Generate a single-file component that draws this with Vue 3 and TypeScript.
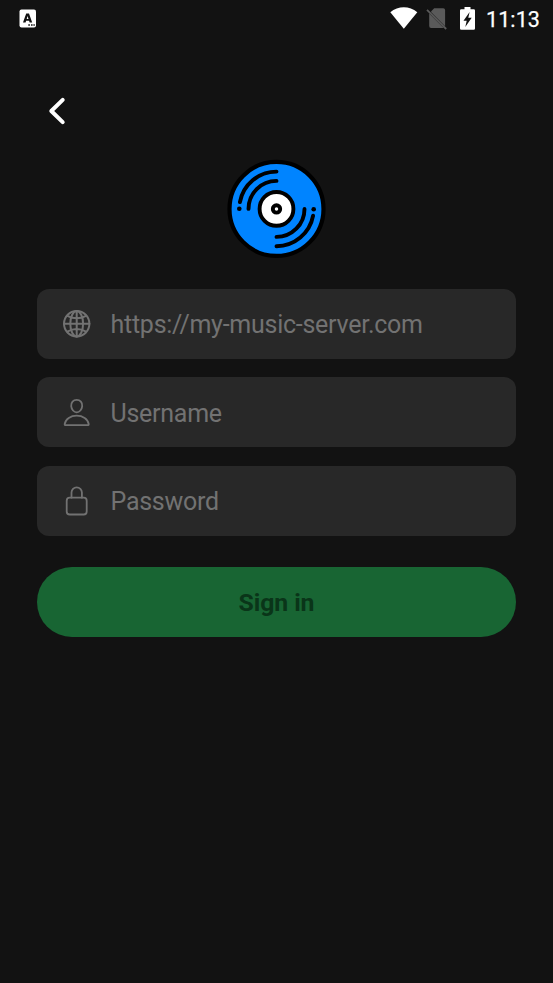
<script setup lang="ts">
import { reactive, computed } from 'vue'

type FieldKey = 'url' | 'username' | 'password'

interface Field {
  key: FieldKey
  type: string
  placeholder: string
}

const fields: Field[] = [
  { key: 'url', type: 'text', placeholder: 'https://my-music-server.com' },
  { key: 'username', type: 'text', placeholder: 'Username' },
  { key: 'password', type: 'password', placeholder: 'Password' },
]

const form = reactive<Record<FieldKey, string>>({ url: '', username: '', password: '' })
const ready = computed(() => Boolean(form.url && form.username && form.password))
</script>

<template>
  <div class="screen">
    <header class="status">
      <svg class="app-badge" width="18" height="20" viewBox="0 0 18 20">
        <rect x="0.5" y="0.5" width="16.5" height="18" rx="2" fill="#fff" />
        <path d="M4 13.400 7.200 4.400h2.800l3.200 9h-2.600l-.5-1.600H7.100l-.5 1.600ZM7.700 10h1.800l-.9-2.900Z" fill="#121212" />
        <path d="M9.300 16h1.600M12 16h1.600M14.400 16h1.400" stroke="#121212" stroke-width="1.400" />
      </svg>
      <div class="indicators">
        <svg class="wifi" width="28" height="22" viewBox="0 0 28 22">
          <path d="M0.300 5.200C8.200-1.300 19.400-1.300 27.300 5.200L13.800 21.800Z" fill="#fff" />
        </svg>
        <svg class="no-sim" width="22" height="22" viewBox="0 0 22 22">
          <path d="M8.200.2h9q1.900 0 1.900 1.900v16.100L5.200 4.300V3.200ZM3.200 5.400 17.700 19.900H5.100q-1.900 0-1.900-1.900Z" fill="#5a5a5a" />
          <path d="M1 1.800 20.200 21" stroke="#5a5a5a" stroke-width="1.800" />
        </svg>
        <svg class="battery" width="15" height="23" viewBox="0 0 15 23">
          <path d="M4.500 0h6v2.200h3.200q1.300 0 1.300 1.300v17.900q0 1.300-1.300 1.300H1.300Q0 22.700 0 21.400V3.500Q0 2.200 1.300 2.200h3.200Z" fill="#fff" />
          <path d="M9.600 5 3.500 13.800h3.200L5.300 20 11.700 10.700H8.300Z" fill="#121212" />
        </svg>
        <span class="clock">11:13</span>
      </div>
    </header>

    <main class="content">
      <button class="back" type="button" aria-label="Back">
        <svg width="18" height="28" viewBox="0 0 18 28">
          <path d="M14.700 2.900 3.300 14 14.700 25.100" fill="none" stroke="#fff" stroke-width="4" stroke-linecap="round" stroke-linejoin="round" />
        </svg>
      </button>

      <svg class="logo" width="99" height="99" viewBox="-49.500 -49.900 99 99">
        <circle r="47" fill="#0084ff" stroke="#000" stroke-width="4.200" />
        <g fill="none" stroke="#000" stroke-width="3.900" stroke-linecap="round">
          <path d="M-36.600-6.800A37.300 37.300 0 0 1 0-37.300M-28 0A28 28 0 0 1 0-28" />
          <path d="M36.600 6.800A37.300 37.300 0 0 1 0 37.300M28 0A28 28 0 0 1 0 28" />
        </g>
        <circle cx="-37.200" cy="-0.200" r="2.300" />
        <circle cx="37.200" cy="0.400" r="2.300" />
        <circle r="16.900" fill="#fff" stroke="#000" stroke-width="3.900" />
        <circle r="3.700" fill="#fff" stroke="#000" stroke-width="3.900" />
      </svg>

      <form class="form" @submit.prevent>
        <label v-for="field in fields" :key="field.key" class="field" :class="field.key">
          <svg class="icon" width="28" height="32" viewBox="0 0 28 32">
            <g v-if="field.key === 'url'">
              <circle cx="13.700" cy="15.700" r="12.700" />
              <ellipse cx="13.700" cy="15.700" rx="6.400" ry="12.700" />
              <path d="M13.700 3v25.400M1 15.700h25.400M4.300 7.800q9.400 5 18.800 0M4.300 23.600q9.400-5 18.800 0" />
            </g>
            <g v-else-if="field.key === 'username'">
              <path d="M13.700 2.900c3.500 0 5.800 2.700 5.500 6.200-.3 3.400-2.700 6.200-5.500 6.200s-5.200-2.800-5.500-6.200C7.900 5.600 10.200 2.900 13.700 2.900Z" />
              <path d="M13.700 18.700c6 0 11.200 3.300 12 8.300.1.800-.2 1.200-1 1.200H2.700c-.8 0-1.100-.4-1-1.200C2.500 22 7.700 18.700 13.700 18.700Z" />
            </g>
            <g v-else>
              <rect x="3.700" y="12.700" width="20" height="16.800" rx="3" />
              <path d="M8.500 12.700V7.600a5.200 5.200 0 0 1 10.400 0v5.100" />
            </g>
          </svg>
          <input v-model="form[field.key]" :type="field.type" :placeholder="field.placeholder" />
        </label>
        <button class="submit" :class="{ ready }" type="submit">Sign in</button>
      </form>
    </main>
  </div>
</template>

<style>
body {
  background: #121212;
}
</style>

<style scoped>
.screen {
  min-height: 983px;
  box-sizing: border-box;
  background: #121212;
  color: #fff;
  font-family: Roboto, "Liberation Sans", sans-serif;
}
.status {
  display: flex;
  justify-content: space-between;
  height: 37px;
  padding: 0 13px 0 19px;
}
.app-badge {
  margin-top: 9px;
}
.indicators {
  display: flex;
  align-items: flex-start;
}
.wifi {
  margin: 7px 8px 0 0;
}
.no-sim {
  margin: 8px 12px 0 0;
}
.battery {
  margin: 7px 11px 0 0;
}
.clock {
  width: 54px;
  font-size: 21.500px;
  font-weight: 400;
  line-height: 39px;
  letter-spacing: 0.1px;
  -webkit-text-stroke: 0.250px #fff;
}
.content {
  display: flex;
  flex-direction: column;
  padding: 60px 37px 0;
}
.back {
  display: flex;
  align-self: flex-start;
  margin: 0 0 34px 11px;
  padding: 0;
  border: 0;
  background: none;
}
.logo {
  align-self: center;
  margin-bottom: 31px;
}
.form {
  display: flex;
  flex-direction: column;
}
.field {
  display: flex;
  align-items: center;
  gap: 19.500px;
  height: 70px;
  box-sizing: border-box;
  padding: 0 26px;
  border-radius: 12px;
  background: #282828;
}
.url {
  margin-bottom: 18px;
}
.username {
  margin-bottom: 19px;
  padding-top: 1px;
}
.icon {
  flex: none;
  fill: none;
  stroke: #727272;
  stroke-width: 1.800;
  stroke-linecap: round;
  stroke-linejoin: round;
}
.url .icon {
  stroke-width: 2;
}
.field input {
  flex: 1;
  min-width: 0;
  padding: 2px 0 0;
  border: 0;
  outline: 0;
  background: none;
  color: #fff;
  font: 400 25px/32px Roboto, "Liberation Sans", sans-serif;
  letter-spacing: -0.260px;
}
.field input::placeholder {
  color: #727272;
  opacity: 1;
}
.submit {
  height: 70px;
  margin-top: 31px;
  padding: 2px 0 0;
  border: 0;
  border-radius: 35px;
  background: #186533;
  color: #0a3519;
  font: 700 24.800px/68px Roboto, "Liberation Sans", sans-serif;
  letter-spacing: -0.100px;
}
.submit.ready {
  background: #1db954;
  color: #121212;
}
</style>
